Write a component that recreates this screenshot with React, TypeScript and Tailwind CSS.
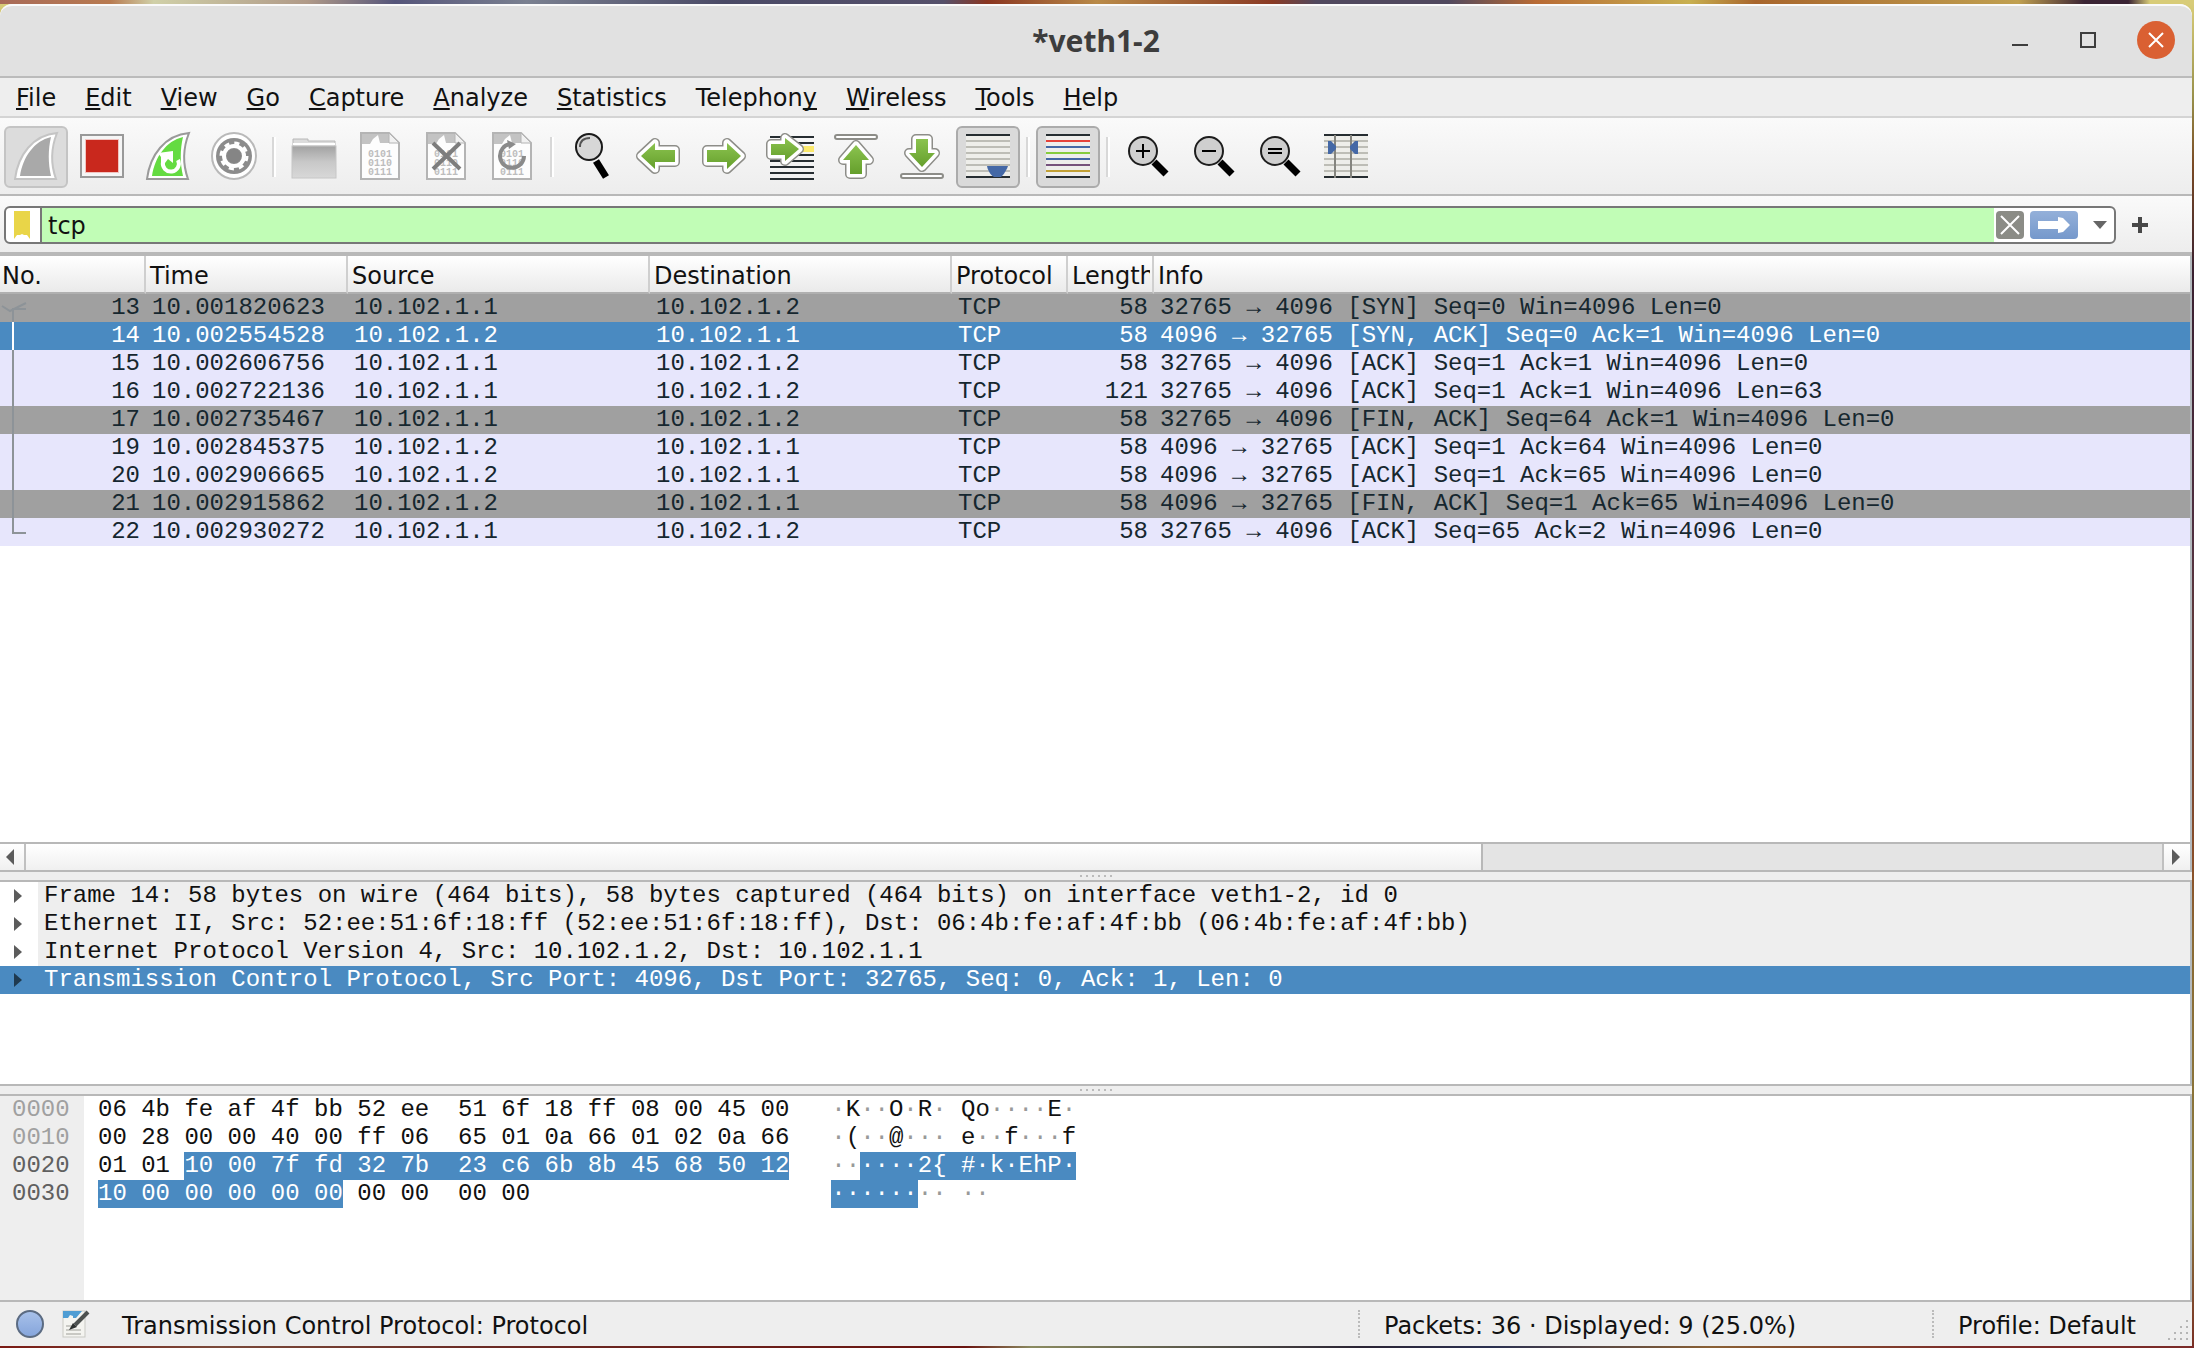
import React, { useState } from 'react'

const packets = [
  { no: 13, time: '10.001820623', src: '10.102.1.1', dst: '10.102.1.2', len: 58, kind: 'syn', info: '32765 → 4096 [SYN] Seq=0 Win=4096 Len=0' },
  { no: 14, time: '10.002554528', src: '10.102.1.2', dst: '10.102.1.1', len: 58, kind: 'syn', info: '4096 → 32765 [SYN, ACK] Seq=0 Ack=1 Win=4096 Len=0' },
  { no: 15, time: '10.002606756', src: '10.102.1.1', dst: '10.102.1.2', len: 58, kind: 'tcp', info: '32765 → 4096 [ACK] Seq=1 Ack=1 Win=4096 Len=0' },
  { no: 16, time: '10.002722136', src: '10.102.1.1', dst: '10.102.1.2', len: 121, kind: 'tcp', info: '32765 → 4096 [ACK] Seq=1 Ack=1 Win=4096 Len=63' },
  { no: 17, time: '10.002735467', src: '10.102.1.1', dst: '10.102.1.2', len: 58, kind: 'syn', info: '32765 → 4096 [FIN, ACK] Seq=64 Ack=1 Win=4096 Len=0' },
  { no: 19, time: '10.002845375', src: '10.102.1.2', dst: '10.102.1.1', len: 58, kind: 'tcp', info: '4096 → 32765 [ACK] Seq=1 Ack=64 Win=4096 Len=0' },
  { no: 20, time: '10.002906665', src: '10.102.1.2', dst: '10.102.1.1', len: 58, kind: 'tcp', info: '4096 → 32765 [ACK] Seq=1 Ack=65 Win=4096 Len=0' },
  { no: 21, time: '10.002915862', src: '10.102.1.2', dst: '10.102.1.1', len: 58, kind: 'syn', info: '4096 → 32765 [FIN, ACK] Seq=1 Ack=65 Win=4096 Len=0' },
  { no: 22, time: '10.002930272', src: '10.102.1.1', dst: '10.102.1.2', len: 58, kind: 'tcp', info: '32765 → 4096 [ACK] Seq=65 Ack=2 Win=4096 Len=0' },
]

const details = [
  'Frame 14: 58 bytes on wire (464 bits), 58 bytes captured (464 bits) on interface veth1-2, id 0',
  'Ethernet II, Src: 52:ee:51:6f:18:ff (52:ee:51:6f:18:ff), Dst: 06:4b:fe:af:4f:bb (06:4b:fe:af:4f:bb)',
  'Internet Protocol Version 4, Src: 10.102.1.2, Dst: 10.102.1.1',
  'Transmission Control Protocol, Src Port: 4096, Dst Port: 32765, Seq: 0, Ack: 1, Len: 0',
]

// each line is split in [before, selected, after]
const hexLines = [
  { off: '0000', dim: true, hex: ['06 4b fe af 4f bb 52 ee  51 6f 18 ff 08 00 45 00', '', ''], asc: ['·K··O·R· Qo····E·', '', ''] },
  { off: '0010', dim: true, hex: ['00 28 00 00 40 00 ff 06  65 01 0a 66 01 02 0a 66', '', ''], asc: ['·(··@··· e··f···f', '', ''] },
  { off: '0020', dim: false, hex: ['01 01 ', '10 00 7f fd 32 7b  23 c6 6b 8b 45 68 50 12', ''], asc: ['··', '····2{ #·k·EhP·', ''] },
  { off: '0030', dim: false, hex: ['', '10 00 00 00 00 00', ' 00 00  00 00'], asc: ['', '······', '·· ··'] },
]

// menu label and the index of its mnemonic letter
const menus: [string, number][] = [
  ['File', 0], ['Edit', 0], ['View', 0], ['Go', 0], ['Capture', 0], ['Analyze', 0],
  ['Statistics', 0], ['Telephony', 8], ['Wireless', 0], ['Tools', 0], ['Help', 0],
]

const Icon = ({ children }: any) => (
  <svg className="h-[52px] w-12 overflow-visible" viewBox="-24 -26 48 52" aria-hidden="true">{children}</svg>
)

const FinShape = ({ line, fill }: any) => (
  <>
    <path d="M-21 22C-18-2-3-22 21-24C15-9 15 8 20 22Z" fill="#fff" stroke={line} strokeWidth="2" />
    <path d="M-16 19C-13 0-2-16 15-20C12-8 12 7 15 19Z" fill={fill} />
  </>
)

const FinIcon = () => <Icon><FinShape line="#c4c4c4" fill="#a9a9a9" /></Icon>

const StopIcon = () => (
  <Icon>
    <rect x="-21" y="-22" width="42" height="42" fill="#f5f5f5" stroke="#999" strokeWidth="2" />
    <rect x="-17" y="-18" width="34" height="34" fill="#f1c3c0" />
    <rect x="-16" y="-17" width="32" height="32" fill="#c9281d" />
  </Icon>
)

const RestartIcon = () => (
  <Icon>
    <FinShape line="#9a9a9a" fill="#64db41" />
    <path d="M10 3A8 8 0 1 1-5 5" fill="none" stroke="#fff" strokeWidth="4" />
    <path d="M-10-4L5-6V6L0 2L-3 6H-7V0Z" fill="#fff" />
  </Icon>
)

const GearIcon = () => (
  <Icon>
    <ellipse cx="0" cy="-1" rx="22" ry="23" fill="#fff" stroke="#b9b9b9" strokeWidth="2" />
    <ellipse cx="0" cy="-1" rx="18" ry="18" fill="#8c8c8c" />
    <circle cx="0" cy="-1" r="10" fill="none" stroke="#fff" strokeWidth="4" />
    <circle cx="0" cy="-1" r="13" fill="none" stroke="#fff" strokeWidth="3" strokeDasharray="5.1 5.1" />
    <circle cx="0" cy="-1" r="7" fill="#858585" />
  </Icon>
)

const FolderIcon = () => (
  <Icon>
    <defs>
      <linearGradient id="folder" x1="0" y1="0" x2="0" y2="1">
        <stop offset="0" stopColor="#a2a2a2" />
        <stop offset=".5" stopColor="#c8c8c8" />
        <stop offset="1" stopColor="#d8d8d8" />
      </linearGradient>
    </defs>
    <path d="M-21-16V-18H-6V-16H21V-9H-21Z" fill="#dcdcdc" stroke="#b8b8b8" strokeWidth="1" />
    <path d="M-21-13H21" stroke="#fff" strokeWidth="2" />
    <rect x="-22" y="-11" width="44" height="32" fill="url(#folder)" stroke="#c6c6c6" strokeWidth="1" />
  </Icon>
)

const Sheet = () => (
  <>
    <path d="M-19-24H9L19-14V22H-19Z" fill="#fdfdfd" stroke="#b4b4b4" strokeWidth="2" />
    <path d="M-18-23H9V-14H0L-2-22L-7-18L-10-13H-18Z" fill="#c3c3c3" />
    <path d="M9-24V-14H19Z" fill="#f1f1f1" stroke="#b4b4b4" strokeWidth="1" />
    <g className="font-['Liberation_Mono',monospace]" fontSize="10" fontWeight="bold" fill="#bdbdbd" textAnchor="middle">
      <text x="0" y="0">0101</text>
      <text x="0" y="9">0110</text>
      <text x="0" y="18">0111</text>
    </g>
  </>
)

const SaveIcon = () => <Icon><Sheet /></Icon>
const CloseFileIcon = () => (
  <Icon>
    <Sheet />
    <path d="M-13-14L14 12M14-14L-13 12" stroke="#7d7d7d" strokeWidth="4" />
  </Icon>
)
const ReloadIcon = () => (
  <Icon>
    <Sheet />
    <path d="M12-1A12 12 0 1 1-2-13" fill="none" stroke="#8a8a8a" strokeWidth="4" />
    <path d="M-5-17L4-13L-3-8Z" fill="#8a8a8a" />
  </Icon>
)

const FindIcon = () => (
  <Icon>
    <path d="M4 4L14 20" stroke="#000" strokeWidth="7" />
    <ellipse cx="-3" cy="-10" rx="13" ry="13" fill="#d7d7d7" stroke="#1a1a1a" strokeWidth="2" />
    <path d="M-12-10C-12-16-8-19-2-19" fill="none" stroke="#555" strokeWidth="2" />
  </Icon>
)

const ZoomIcon = ({ sign }: any) => (
  <Icon>
    <path d="M6 5L18 17" stroke="#000" strokeWidth="7" />
    <circle cx="-5" cy="-6" r="14" fill="#cfcfcf" stroke="#1d1d1d" strokeWidth="2" />
    <path d={sign} stroke="#000" strokeWidth="2" />
  </Icon>
)

// green arrow with white rim and grey outline
const Arrow = ({ d }: any) => (
  <>
    <path d={d} fill="#8d8d88" stroke="#8d8d88" strokeWidth="10" strokeLinejoin="round" />
    <path d={d} fill="#fff" stroke="#fff" strokeWidth="7" strokeLinejoin="round" />
    <path d={d} fill="url(#green)" />
  </>
)

const Green = () => (
  <defs>
    <linearGradient id="green" x1="0" y1="0" x2="0" y2="1">
      <stop offset="0" stopColor="#8bc34f" />
      <stop offset="1" stopColor="#659f2c" />
    </linearGradient>
  </defs>
)

const PrevIcon = () => <Icon><Green /><Arrow d="M-17-1L-3-14V-7H17V5H-3V12Z" /></Icon>
const NextIcon = () => <Icon><Arrow d="M17-1L3-14V-7H-17V5H3V12Z" /></Icon>
const GotoIcon = () => (
  <Icon>
    <path d="M-20-20H24M-20-14H24M-20-2H24M-20 4H24M-20 10H24M-20 16H24M-20 22H24" stroke="#262d31" strokeWidth="2" />
    <rect x="10" y="-11" width="14" height="6" fill="#fbe96c" />
    <Arrow d="M9-8L-5-19V-13H-19V-2H-5V4Z" />
  </Icon>
)
const FirstIcon = () => (
  <Icon>
    <rect x="-21" y="-22" width="42" height="4" rx="2" fill="#fff" stroke="#8d8d88" strokeWidth="2" />
    <Arrow d="M0-12L13 3H6V17H-6V3H-13Z" />
  </Icon>
)
const LastIcon = () => (
  <Icon>
    <rect x="-21" y="17" width="42" height="4" rx="2" fill="#fff" stroke="#8d8d88" strokeWidth="2" />
    <Arrow d="M0 10L13-4H6V-18H-6V-4H-13Z" />
  </Icon>
)

const Ruled = () => (
  <>
    <rect x="-22" y="-23" width="44" height="44" fill="#eeeeea" />
    <path d="M-22-16H22M-22-10H22M-22-4H22M-22 2H22M-22 8H22M-22 14H22" stroke="#bdbdb6" strokeWidth="2" />
    <path d="M-22-22H22M-22 20H22" stroke="#262d31" strokeWidth="2" />
  </>
)

const AutoScrollIcon = () => (
  <Icon>
    <Ruled />
    <path d="M-1 9H20C18 15 14 19 13 20H6C4 19 0 15-1 9Z" fill="#4468a6" />
  </Icon>
)

const rowColors = ['#262d31', '#e5423a', '#4468a6', '#86cc3e', '#4468a6', '#76527c', '#c2a136', '#262d31']
const ColorizeIcon = () => (
  <Icon>
    <rect x="-22" y="-23" width="44" height="44" fill="#eeeeec" />
    {rowColors.map((c, i) => <rect key={i} x="-22" y={-23 + i * 6} width="44" height="2" fill={c} />)}
  </Icon>
)

const ColumnsIcon = () => (
  <Icon>
    <Ruled />
    <path d="M-11-22V21M5-22V21" stroke="#85857f" strokeWidth="2" />
    <path d="M-18-16H-15L-10-11V-8L-15-3H-18ZM12-16H9L4-11V-8L9-3H12Z" fill="#4468a6" />
  </Icon>
)

const tools: any[] = [
  { label: 'Start capture', icon: <FinIcon />, state: 'soft' },
  { label: 'Stop capture', icon: <StopIcon /> },
  { label: 'Restart capture', icon: <RestartIcon /> },
  { label: 'Capture options', icon: <GearIcon /> },
  null,
  { label: 'Open', icon: <FolderIcon /> },
  { label: 'Save', icon: <SaveIcon /> },
  { label: 'Close file', icon: <CloseFileIcon /> },
  { label: 'Reload file', icon: <ReloadIcon /> },
  null,
  { label: 'Find packet', icon: <FindIcon /> },
  { label: 'Previous packet', icon: <PrevIcon /> },
  { label: 'Next packet', icon: <NextIcon /> },
  { label: 'Go to packet', icon: <GotoIcon /> },
  { label: 'First packet', icon: <FirstIcon /> },
  { label: 'Last packet', icon: <LastIcon /> },
  { label: 'Auto scroll', icon: <AutoScrollIcon />, state: 'on' },
  null,
  { label: 'Colorize', icon: <ColorizeIcon />, state: 'on' },
  null,
  { label: 'Zoom in', icon: <ZoomIcon sign="M-12-6H2M-5-13V1" /> },
  { label: 'Zoom out', icon: <ZoomIcon sign="M-12-6H2" /> },
  { label: 'Normal size', icon: <ZoomIcon sign="M-12-8H2M-12-4H2" /> },
  { label: 'Resize columns', icon: <ColumnsIcon /> },
]

function TitleBar() {
  return (
    <header className="grid h-[74px] grid-cols-[1fr_auto_1fr] items-center rounded-t-xl border-t-2 border-b-2 border-t-[#fafafa] border-b-[#bbb] bg-[#e1e1e1] pb-0.5">
      <span />
      <h1 className="pt-0.5 font-['Noto_Sans',sans-serif] text-3xl leading-8 font-bold text-[#3d3d3d]">*veth1-2</h1>
      <div className="flex items-center justify-end gap-7 pr-4">
        <button aria-label="Minimize" className="flex size-10 items-center justify-center">
          <svg width="16" height="16"><path d="M0 13H16" stroke="#3d3d3d" strokeWidth="2" /></svg>
        </button>
        <button aria-label="Maximize" className="flex size-10 items-center justify-center">
          <svg width="16" height="16"><rect x="1" y="1" width="14" height="14" fill="none" stroke="#3d3d3d" strokeWidth="2" /></svg>
        </button>
        <button aria-label="Close" className="flex size-10 items-center justify-center rounded-full border border-transparent bg-[#da6032] bg-clip-padding">
          <svg width="16" height="16"><path d="M1 1L15 15M15 1L1 15" stroke="#fff" strokeWidth="2" /></svg>
        </button>
      </div>
    </header>
  )
}

function MenuBar() {
  return (
    <nav className="flex h-10 items-center gap-[29px] border-b-2 border-[#d4d4d4] pt-0.5 pl-4">
      {menus.map(([name, i]) => (
        <button key={name} className="leading-7">
          {name.slice(0, i)}
          <u className="decoration-2 underline-offset-2 [text-decoration-skip-ink:none]">{name[i]}</u>
          {name.slice(i + 1)}
        </button>
      ))}
    </nav>
  )
}

function ToolBar() {
  return (
    <div className="flex h-[78px] items-center gap-0.5 border-b-2 border-[#b8b8b8] bg-linear-to-b from-[#fafafa] to-[#ededed] pt-0.5 pl-1">
      {tools.map((t, i) => {
        if (!t) {
          return <div key={i} className="flex h-10 w-3 justify-center"><div className="w-1 border-r-2 border-l-2 border-r-white border-l-[#d8d8d8]" /></div>
        }
        let look = 'border-transparent'
        if (t.state === 'soft') look = 'border-[#c4c4c4] bg-[#dcdcdc]'
        if (t.state === 'on') look = 'border-[#ababab] bg-[#dadada]'
        return (
          <button key={i} aria-label={t.label} className={`flex h-[62px] w-16 items-center justify-center rounded-md border-2 ${look}`}>
            {t.icon}
          </button>
        )
      })}
    </div>
  )
}

function FilterBar() {
  const [filter, setFilter] = useState('tcp')
  return (
    <div className="flex h-[60px] border-b-4 border-[#b8b8b8] bg-linear-to-b from-[#fafafa] to-[#ededed] pt-2.5 pr-7 pb-2 pl-1">
      <div className="flex flex-1 overflow-hidden rounded-md border-2 border-[#777] bg-white">
        <button aria-label="Filter bookmarks" className="flex w-9 items-center justify-center border-r-2 border-[#777] pr-0.5">
          <svg width="16" height="28"><path d="M0 0H16V28L13 24H10L8 23L6 24H3L0 28Z" fill="#e9d548" /></svg>
        </button>
        <input
          aria-label="Display filter"
          className="min-w-0 flex-1 bg-[#c1fdb6] pt-0.5 pl-1.5 leading-8 outline-none"
          value={filter}
          onChange={(e) => setFilter(e.target.value)}
        />
        <div className="flex w-[120px] items-center gap-1.5 pl-0.5">
          <button aria-label="Clear filter" onClick={() => setFilter('')} className="flex size-7 items-center justify-center rounded-sm bg-[#8b8c86]">
            <svg width="20" height="20"><path d="M1 1L19 19M19 1L1 19" stroke="#fff" strokeWidth="2" /></svg>
          </button>
          <button aria-label="Apply filter" className="flex h-7 w-12 items-center justify-center rounded-sm bg-linear-to-b from-[#94b0d9] to-[#7598cb]">
            <svg width="32" height="16"><path d="M0 4H20V0L25 1L32 8L25 15L20 16V12H0Z" fill="#fff" /></svg>
          </button>
          <button aria-label="Recent filters" className="flex flex-1 items-center justify-center pl-0.5">
            <svg width="14" height="8"><path d="M0 0H14L7 8Z" fill="#666" /></svg>
          </button>
        </div>
      </div>
      <button aria-label="Add filter button" className="flex w-12 items-center justify-center">
        <svg width="16" height="16"><path d="M0 8H16M8 0V16" stroke="#484848" strokeWidth="4" /></svg>
      </button>
    </div>
  )
}

// conversation bracket drawn at the left of the packet numbers
function Mark({ first, last, selected }: any) {
  const c = selected ? '#fff' : '#8d9398'
  return (
    <svg width="28" height="28" aria-hidden="true">
      {first && <path d="M2 12L10 17L26 9" fill="none" stroke="#8d9398" strokeWidth="2" />}
      {first && <path d="M26 15H13V28" fill="none" stroke={c} strokeWidth="2" />}
      {last && <path d="M13 0V15H26" fill="none" stroke={c} strokeWidth="2" />}
      {!first && !last && <path d="M13 0V28" stroke={c} strokeWidth="2" />}
    </svg>
  )
}

function PacketList() {
  const [sel, setSel] = useState(14)
  const th = 'h-[38px] border-b-2 border-b-[#b0b0b0] border-r-2 border-r-[#cfcfcf] p-0 pt-1 pr-0.5 pl-1 text-left font-normal'
  return (
    <section className="flex min-h-0 flex-1 flex-col border-r-2 border-[#b3b9bd] bg-white">
      <div className="min-h-0 flex-1 overflow-hidden">
        <table className="w-full table-fixed border-separate border-spacing-0 leading-7 whitespace-nowrap">
          <colgroup>
            <col className="w-[146px]" />
            <col className="w-[202px]" />
            <col className="w-[302px]" />
            <col className="w-[302px]" />
            <col className="w-[116px]" />
            <col className="w-[86px]" />
            <col />
          </colgroup>
          <thead className="bg-linear-to-b from-white to-[#e9e9e9]">
            <tr>
              <th className="h-[38px] border-r-2 border-b-2 border-r-[#cfcfcf] border-b-[#b0b0b0] p-0 pt-1 pl-0.5 text-left font-normal">No.</th>
              <th className={th}>Time</th>
              <th className={th}>Source</th>
              <th className={th}>Destination</th>
              <th className={th}>Protocol</th>
              <th className={th}><div className="overflow-hidden">Length</div></th>
              <th className="h-[38px] border-b-2 border-[#b0b0b0] p-0 pt-1 pl-1 text-left font-normal">Info</th>
            </tr>
          </thead>
          <tbody className="font-['Liberation_Mono',monospace] text-[#16272f]">
            {packets.map((p, i) => {
              const selected = p.no === sel
              let bg = p.kind === 'syn' ? 'bg-[#a0a0a0]' : 'bg-[#e7e6fc]'
              if (selected) bg = 'bg-[#4a8ac1] text-white'
              return (
                <tr key={p.no} className={bg} onClick={() => setSel(p.no)}>
                  <td className="h-7 p-0 pr-1.5">
                    <div className="flex justify-between">
                      <Mark first={i === 0} last={i === packets.length - 1} selected={selected} />
                      <span>{p.no}</span>
                    </div>
                  </td>
                  <td className="p-0 pl-1.5">{p.time}</td>
                  <td className="p-0 pl-1.5">{p.src}</td>
                  <td className="p-0 pl-1.5">{p.dst}</td>
                  <td className="p-0 pl-1.5">TCP</td>
                  <td className="p-0 pr-1.5 text-right">{p.len}</td>
                  <td className="p-0 pl-1.5">{p.info}</td>
                </tr>
              )
            })}
          </tbody>
        </table>
      </div>
      <div className="flex h-[30px] border-t-2 border-b-2 border-[#b8b8b8] bg-[#e4e4e4]">
        <button aria-label="Scroll left" className="flex w-[26px] items-center border-r-2 border-[#c0c0c0] bg-linear-to-b from-white to-[#f0f0f0] pl-1.5">
          <svg width="8" height="16"><path d="M8 0V16L0 8Z" fill="#5c5c5c" /></svg>
        </button>
        <div className="flex flex-1">
          <div className="w-[68.2%] border-r-2 border-[#b8b8b8] bg-linear-to-b from-white to-[#f0f0f0]" />
        </div>
        <button aria-label="Scroll right" className="flex w-7 items-center border-l-2 border-[#c0c0c0] bg-linear-to-b from-white to-[#f0f0f0] pl-2">
          <svg width="8" height="16"><path d="M0 0V16L8 8Z" fill="#5c5c5c" /></svg>
        </button>
      </div>
    </section>
  )
}

function Splitter() {
  return (
    <div className="flex h-2.5 items-center justify-center gap-1 border-b-2 border-[#b8b8b8]">
      {[0, 1, 2, 3, 4, 5].map((i) => <span key={i} className="size-0.5 bg-[#bbb]" />)}
    </div>
  )
}

function DetailTree() {
  const [sel, setSel] = useState(3)
  return (
    <section className="h-[204px] overflow-hidden border-r-2 border-b-2 border-r-[#b3b9bd] border-b-[#b8b8b8] bg-white font-['Liberation_Mono',monospace]">
      {details.map((d, i) => (
        <button
          key={i}
          onClick={() => setSel(i)}
          className={`flex h-7 w-full items-center text-left leading-7 whitespace-nowrap ${i === sel ? 'bg-[#4a8ac1] text-white' : ''}`}
        >
          <span className="w-[38px] pl-3.5">
            <svg width="8" height="14"><path d="M0 0V14L8 7Z" fill={i === sel ? '#1f3a50' : '#5c5c5c'} /></svg>
          </span>
          <span className={`flex-1 pl-1.5 ${i === sel ? '' : 'bg-[#eee]'}`}>{d}</span>
        </button>
      ))}
    </section>
  )
}

// non printable bytes are shown as grey dots
const dots = (s: string) => s.split(/(·+)/).map((part, i) => (
  part[0] === '·' ? <span key={i} className="text-[#999]">{part}</span> : part
))

function HexDump() {
  return (
    <section className="flex h-[206px] border-r-2 border-b-2 border-r-[#b3b9bd] border-b-[#b8b8b8] bg-white font-['Liberation_Mono',monospace] leading-7 whitespace-pre">
      <div className="w-[84px] bg-[#eee] pl-3">
        {hexLines.map((l) => <div key={l.off} className={l.dim ? 'text-[#a0a0a0]' : 'text-[#606060]'}>{l.off}</div>)}
      </div>
      <div className="pl-3.5">
        {hexLines.map((l) => (
          <div key={l.off} className="flex h-7">
            <span>{l.hex[0]}</span>
            <span className="bg-[#4a8ac1] text-white">{l.hex[1]}</span>
            <span>{l.hex[2]}</span>
          </div>
        ))}
      </div>
      <div className="pl-[42px]">
        {hexLines.map((l) => (
          <div key={l.off} className="flex h-7">
            <span>{dots(l.asc[0])}</span>
            <span className="bg-[#4a8ac1] text-white">{l.asc[1]}</span>
            <span>{dots(l.asc[2])}</span>
          </div>
        ))}
      </div>
    </section>
  )
}

function StatusBar() {
  return (
    <footer className="flex h-11 items-center leading-8">
      <div className="flex flex-1 items-center pl-4">
        <button aria-label="Expert information">
          <svg width="28" height="28">
            <defs>
              <linearGradient id="expert" x1="0" y1="0" x2="0" y2="1">
                <stop offset="0" stopColor="#a9c2ea" />
                <stop offset="1" stopColor="#84a4db" />
              </linearGradient>
            </defs>
            <circle cx="14" cy="14" r="13" fill="url(#expert)" stroke="#5b6b82" strokeWidth="2" />
          </svg>
        </button>
        <button aria-label="Capture comment" className="pl-[18px]">
          <svg width="28" height="28">
            <rect x="1" y="1" width="22" height="26" fill="#f4f4f0" stroke="#c9c9c4" strokeWidth="1" />
            <path d="M1 1H20L14 8H11V6L8 5L6 8H1Z" fill="#4f9dd3" />
            <path d="M4 16H12M4 20H19M4 24H19" stroke="#c9c9c4" strokeWidth="2" />
            <path d="M26 2L13 15" stroke="#4d5150" strokeWidth="4" />
            <path d="M11 13L7 20L15 17Z" fill="#2d3130" />
          </svg>
        </button>
        <span className="pt-1 pl-8">Transmission Control Protocol: Protocol</span>
      </div>
      <div className="flex w-[574px] items-center">
        <span className="h-7 border-l-2 border-dotted border-[#bbb] pr-6" />
        <span className="pt-1">Packets: 36 · Displayed: 9 (25.0%)</span>
      </div>
      <div className="flex w-[260px] items-center">
        <span className="h-7 border-l-2 border-dotted border-[#bbb] pr-6" />
        <span className="flex-1 pt-1">Profile: Default</span>
        <svg width="24" height="24" className="mr-0.5 self-end" aria-hidden="true">
          <path d="M2 21H24M8 15H24M14 9H24M20 3H24" stroke="#b5b5b5" strokeWidth="2" strokeDasharray="2 4" />
        </svg>
      </div>
    </footer>
  )
}

export default function App() {
  return (
    <div className="flex h-screen min-h-[900px] flex-col bg-[linear-gradient(90deg,#a86a58_0%,#b87a50_5%,#d0d0a8_7%,#b09a88_14%,#55557a_18%,#7a8090_24%,#4a4a66_33%,#55506a_43%,#8a3520_45%,#b98a48_50%,#8a3a24_58%,#50485e_60%,#50485e_66%,#b86a34_70%,#c8b050_77%,#a8652c_80%,#c0a050_92%,#3a2434_95%,#3a2434_97%,#d8cc78_98%,#d8cc78_100%)] pt-1">
      <div className="flex min-h-0 flex-1 flex-col bg-[linear-gradient(180deg,#d8cc78_0%,#98904a_7%,#7a4a24_12%,#3a2030_20%,#503040_40%,#8a4e28_64%,#8a6a34_70%,#8a7a3c_90%,#7a3024_100%)] pr-0.5">
        <main className="flex min-h-0 flex-1 flex-col rounded-t-xl bg-[#eee] font-['DejaVu_Sans',sans-serif] text-2xl text-[#111]">
          <TitleBar />
          <MenuBar />
          <ToolBar />
          <FilterBar />
          <PacketList />
          <Splitter />
          <DetailTree />
          <Splitter />
          <HexDump />
          <StatusBar />
        </main>
      </div>
      <div className="h-0.5 bg-[linear-gradient(90deg,#7a1a14_0%,#7a4a3a_10%,#6a2a24_22%,#6a1410_44%,#8a8a60_47%,#2a2434_62%,#2a3050_68%,#8a6034_78%,#7a2a28_90%,#7a2a28_100%)]" />
    </div>
  )
}
